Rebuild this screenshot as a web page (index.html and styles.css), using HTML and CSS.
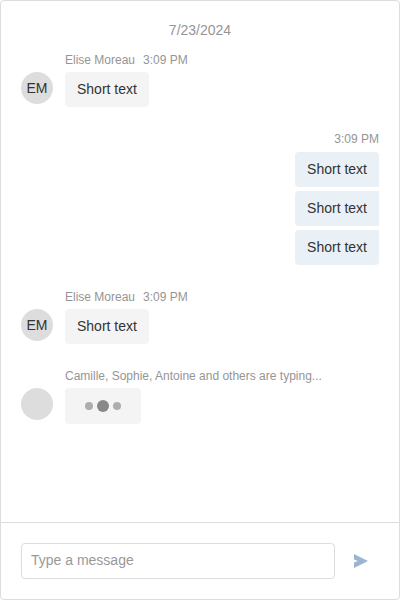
FILE: index.html
```html
<!DOCTYPE html>
<html lang="en">
<head>
<meta charset="utf-8">
<title>Chat</title>
<link rel="stylesheet" href="styles.css">
</head>
<body>
<main class="chat">
  <section class="messages">
    <div class="date">7/23/2024</div>
    <div class="group">
      <div class="avatar">EM</div>
      <div class="content">
        <div class="info"><span>Elise Moreau</span><span>3:09 PM</span></div>
        <div class="bubble">Short text</div>
      </div>
    </div>
    <div class="group own">
      <div class="content">
        <div class="info"><span>3:09 PM</span></div>
        <div class="bubble">Short text</div>
        <div class="bubble">Short text</div>
        <div class="bubble">Short text</div>
      </div>
    </div>
    <div class="group">
      <div class="avatar">EM</div>
      <div class="content">
        <div class="info"><span>Elise Moreau</span><span>3:09 PM</span></div>
        <div class="bubble">Short text</div>
      </div>
    </div>
    <div class="group">
      <div class="avatar"></div>
      <div class="content">
        <div class="info"><span>Camille, Sophie, Antoine and others are typing...</span></div>
        <div class="bubble typing"><i class="dot"></i><i class="dot active"></i><i class="dot"></i></div>
      </div>
    </div>
  </section>
  <footer class="composer">
    <input class="field" type="text" placeholder="Type a message">
    <button class="send" aria-label="Send">
      <svg width="14" height="14" viewBox="0 0 14 14"><path d="M0 0L14 7L0 14V8.6L4 7L0 5.4Z" fill="#99b5d1"/></svg>
    </button>
  </footer>
</main>
</body>
</html>
```
FILE: styles.css
```css
* { box-sizing: border-box; }
body {
  margin: 0;
  background: #fff;
  color: #333;
  font: 14px/19px "Liberation Sans", Arial, sans-serif;
}
.chat {
  display: flex;
  flex-direction: column;
  height: 600px;
  border: 1px solid #ddd;
  border-radius: 4px;
}
.messages {
  flex: 1;
  padding: 20px 20px 0;
}
.date {
  margin-bottom: 12px;
  color: #959595;
  text-align: center;
}
.group {
  display: flex;
  gap: 12px;
  margin-bottom: 24px;
}
.own { justify-content: flex-end; }
.avatar {
  width: 32px;
  height: 32px;
  margin-top: 20px;
  border-radius: 50%;
  background: #ddd;
  line-height: 32px;
  text-align: center;
}
.content {
  display: flex;
  flex-direction: column;
  align-items: flex-start;
  gap: 4px;
}
.own .content { align-items: flex-end; }
.info {
  display: flex;
  gap: 8px;
  color: #959595;
  font-size: 12px;
  line-height: 16px;
}
.own .info { margin-bottom: 1px; }
.bubble {
  height: 35px;
  padding: 8px 12px;
  border-radius: 4px;
  background: #f4f4f4;
}
.own .bubble {
  border-radius: 4px 0 0 4px;
  background: #e9f0f6;
}
.own .info + .bubble { border-top-right-radius: 4px; }
.own .bubble:last-child { border-bottom-right-radius: 4px; }
.typing {
  display: flex;
  align-items: center;
  justify-content: center;
  gap: 4px;
  width: 76px;
  height: 36px;
}
.dot {
  width: 8px;
  height: 8px;
  border-radius: 50%;
  background: #adadad;
}
.active {
  width: 12px;
  height: 12px;
  background: #888;
}
.composer {
  display: flex;
  gap: 8px;
  height: 77px;
  padding: 20px;
  border-top: 1px solid #ddd;
}
.field {
  flex: 1;
  min-width: 0;
  height: 36px;
  padding: 0 9px 2px;
  border: 1px solid #ddd;
  border-radius: 4px;
  background: #fff;
  font: inherit;
}
.field::placeholder { color: #999; opacity: 1; }
.send {
  display: flex;
  align-items: center;
  justify-content: center;
  width: 36px;
  height: 36px;
  padding: 0;
  border: 0;
  background: none;
}
```
